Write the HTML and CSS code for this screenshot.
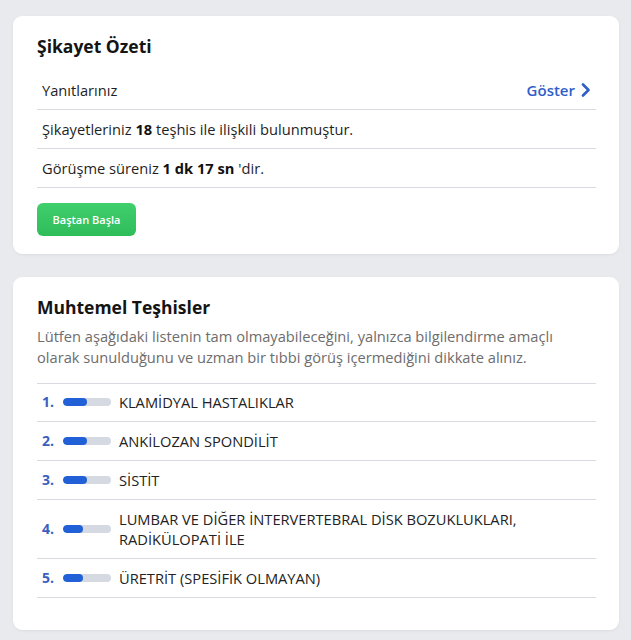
FILE: index.html
```html
<!DOCTYPE html>
<html lang="tr">
<head>
<meta charset="utf-8">
<title>Şikayet Özeti</title>
<link rel="stylesheet" href="styles.css">
</head>
<body>
<main class="page">
  <section class="card">
    <h2 class="card-title">Şikayet Özeti</h2>
    <ul class="rows">
      <li class="row row-split">
        <span>Yanıtlarınız</span>
        <a class="link" href="#">Göster
          <svg class="chev" width="10" height="14" viewBox="0 0 10 14" aria-hidden="true"><path d="M2 1.5 L7.5 7 L2 12.5" fill="none" stroke="currentColor" stroke-width="2.6" stroke-linecap="round" stroke-linejoin="round"/></svg>
        </a>
      </li>
      <li class="row">Şikayetleriniz <b>18</b> teşhis ile ilişkili bulunmuştur.</li>
      <li class="row">Görüşme süreniz <b>1 dk 17 sn</b> 'dir.</li>
    </ul>
    <button class="btn" type="button">Baştan Başla</button>
  </section>

  <section class="card card-2">
    <h2 class="card-title">Muhtemel Teşhisler</h2>
    <p class="desc">Lütfen aşağıdaki listenin tam olmayabileceğini, yalnızca bilgilendirme amaçlı olarak sunulduğunu ve uzman bir tıbbi görüş içermediğini dikkate alınız.</p>
    <ol class="dx">
      <li class="dx-item"><span class="num">1.</span><span class="bar"><span class="fill" style="width:50%"></span></span><span class="dx-name">KLAMİDYAL HASTALIKLAR</span></li>
      <li class="dx-item"><span class="num">2.</span><span class="bar"><span class="fill" style="width:50%"></span></span><span class="dx-name">ANKİLOZAN SPONDİLİT</span></li>
      <li class="dx-item"><span class="num">3.</span><span class="bar"><span class="fill" style="width:50%"></span></span><span class="dx-name">SİSTİT</span></li>
      <li class="dx-item"><span class="num">4.</span><span class="bar"><span class="fill" style="width:42%"></span></span><span class="dx-name">LUMBAR VE DİĞER İNTERVERTEBRAL DİSK BOZUKLUKLARI, RADİKÜLOPATİ İLE</span></li>
      <li class="dx-item"><span class="num">5.</span><span class="bar"><span class="fill" style="width:42%"></span></span><span class="dx-name">ÜRETRİT (SPESİFİK OLMAYAN)</span></li>
    </ol>
  </section>
</main>
</body>
</html>
```
FILE: styles.css
```css
* { box-sizing: border-box; }
html, body { margin: 0; padding: 0; }
body {
  background: #e9eaee;
  font-family: "Open Sans", "Noto Sans", sans-serif;
  color: #1f1f1f;
}
.page {
  padding: 16px 12px 10px 13px;
  display: flex;
  flex-direction: column;
  gap: 23px;
}
.card {
  background: #ffffff;
  border-radius: 9px;
  padding: 17px 23px 18px 24px;
  box-shadow: 0 1px 3px rgba(0,0,0,0.06);
}
.card-2 { padding-bottom: 32px; }
.card-title {
  margin: 0;
  font-size: 17.5px;
  line-height: 26px;
  font-weight: 700;
  color: #141414;
}
.rows {
  list-style: none;
  margin: 12px 0 0;
  padding: 0;
}
.row {
  padding: 9px 5px;
  line-height: 20px;
  font-size: 14.67px;
  border-bottom: 1px solid #d8dadf;
}
.row b { font-weight: 700; color: #111; }
.row-split {
  display: flex;
  justify-content: space-between;
  align-items: center;
}
.link {
  display: flex;
  align-items: center;
  gap: 6px;
  color: #2f5ec8;
  font-size: 15px;
  font-weight: 600;
  text-decoration: none;
}
.chev { display: block; }
.btn {
  margin-top: 15px;
  display: block;
  width: 99px;
  height: 33px;
  border: 0;
  border-radius: 6px;
  background: linear-gradient(#3fcf6c, #2fbd5a);
  color: #fff;
  font-family: inherit;
  font-size: 11px;
  font-weight: 600;
  cursor: pointer;
}
.desc {
  margin: 6px 0 15px;
  font-size: 14.67px;
  line-height: 21px;
  color: #6d6d6d;
}
.dx {
  list-style: none;
  margin: 0;
  padding: 0;
  border-top: 1px solid #d8dadf;
}
.dx-item {
  display: flex;
  align-items: center;
  padding: 9px 5px;
  border-bottom: 1px solid #d8dadf;
  font-size: 14.67px;
  line-height: 20px;
}
.dx-item:first-child { padding-top: 8px; }
.num {
  flex: 0 0 21px;
  color: #3b5fc0;
  font-weight: 700;
  font-size: 14px;
}
.bar {
  flex: 0 0 48px;
  height: 8px;
  border-radius: 4px;
  background: #d5d9e1;
  overflow: hidden;
  margin-right: 8px;
}
.fill {
  display: block;
  height: 100%;
  border-radius: 4px;
  background: #2160d6;
}
.dx-name { color: #222; }
```
